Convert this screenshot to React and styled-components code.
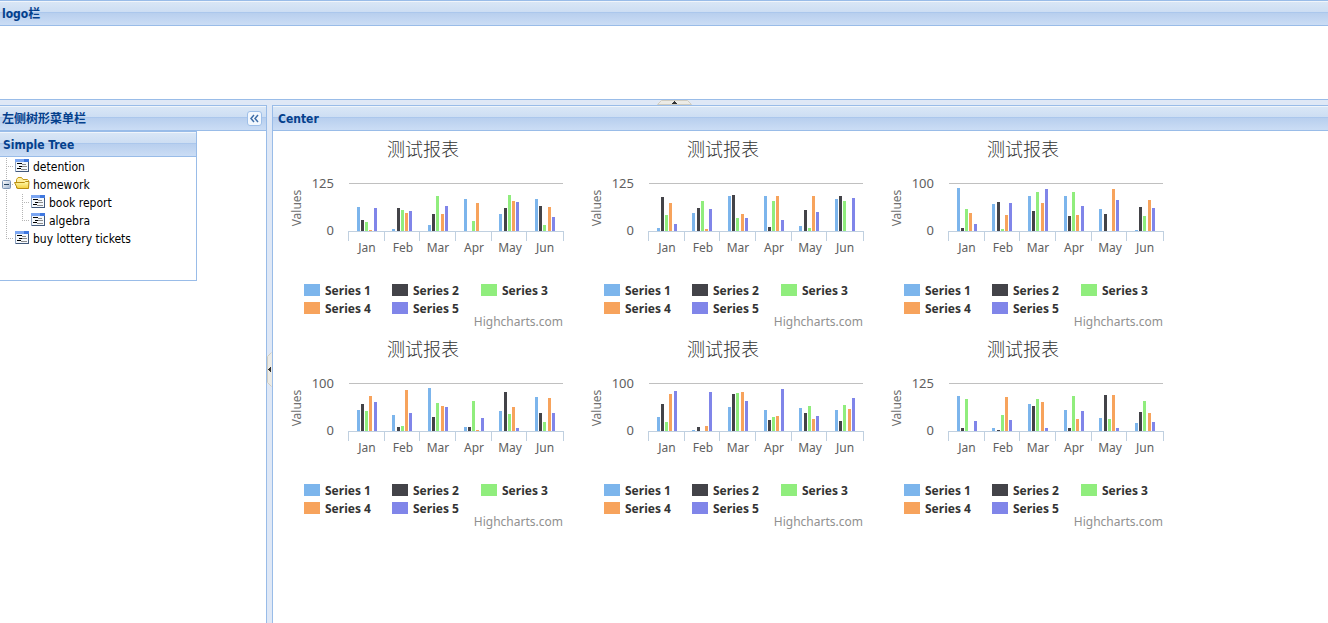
import React, { useState } from "react";
import styled, { createGlobalStyle } from "styled-components";

const GlobalStyle = createGlobalStyle`
  * {
    box-sizing: border-box;
  }
  body {
    margin: 0;
    background-color: #fff;
    font-family: "DejaVu Sans Condensed", "Noto Sans CJK SC", sans-serif;
    font-size: 12px;
    color: #000;
  }
`;

const ViewportWrapper = styled("div")`
  display: flex;
  flex-direction: column;
  height: 100vh;
  overflow: hidden;
`;

const NorthRegion = styled("header")`
  height: 100px;
  flex-shrink: 0;
  border-bottom: 1px solid #99bce8;
`;

const PanelHeader = styled("div")`
  display: flex;
  align-items: center;
  justify-content: space-between;
  height: 26px;
  padding: 0 4px 0 ${(props) => props.$indent || 2}px;
  border-top: 1px solid #99bce8;
  border-bottom: 1px solid #99bce8;
  box-shadow: inset 0 1px 0 #f0f5fb;
  background: linear-gradient(
    #dae7f6,
    #cddef3 45%,
    #abc7ec 46%,
    #abc7ec 50%,
    #b8cfee 51%,
    #cbddf5
  );
`;

const PanelTitle = styled("h2")`
  margin: 0;
  padding-top: 2px;
  font-size: 12px;
  line-height: 18px;
  font-weight: bold;
  color: #04408c;
`;

const HorizontalSplitter = styled("div")`
  display: flex;
  justify-content: center;
  flex-shrink: 0;
  height: 5px;
  padding-left: 20px;
  background-color: #dfe8f6;
`;

const VerticalSplitter = styled("div")`
  display: flex;
  align-items: center;
  flex-shrink: 0;
  width: 5px;
  padding-top: 10px;
  background-color: #dfe8f6;
`;

const SplitterButton = styled("button")`
  display: flex;
  border: none;
  padding: 0;
  background-color: transparent;
  cursor: pointer;
`;

const MainRow = styled("div")`
  display: flex;
  flex-grow: 1;
  min-height: 0;
`;

const WestRegion = styled("nav")`
  width: 267px;
  flex-shrink: 0;
  border-right: 1px solid #99bce8;
`;

const CenterRegion = styled("main")`
  flex-grow: 1;
  min-width: 0;
  overflow: hidden;
  border-left: 1px solid #99bce8;
`;

const CollapseButton = styled("button")`
  display: flex;
  align-items: center;
  justify-content: center;
  width: 15px;
  height: 15px;
  padding: 0;
  border: 1px solid #9ebfe8;
  border-radius: 3px;
  background-color: #f3f8fe;
  cursor: pointer;
`;

const TreePanel = styled("section")`
  width: 197px;
  height: 150px;
  border-right: 1px solid #99bce8;
  border-bottom: 1px solid #99bce8;
`;

const TreeList = styled("ul")`
  list-style: none;
  margin: 0;
  padding: 0;
`;

const TreeRow = styled("div")`
  display: flex;
  height: 18px;
  line-height: 21px;
  cursor: pointer;
`;

const TreeLabel = styled("span")`
  padding-left: 2px;
  white-space: nowrap;
`;

const ExpandButton = styled("button")`
  display: flex;
  width: 15px;
  height: 18px;
  padding: 0;
  border: none;
  background-color: transparent;
  cursor: pointer;
`;

const ChartGrid = styled("div")`
  display: grid;
  grid-template-columns: repeat(3, 300px);
`;

const ChartWrapper = styled("figure")`
  display: flex;
  flex-direction: column;
  height: 200px;
  margin: 0;
  font-family: "Noto Sans", "Noto Sans CJK SC", sans-serif;
`;

const ChartTitle = styled("figcaption")`
  line-height: 35px;
  height: 37px;
  text-align: center;
  font-family: "Noto Sans CJK SC", sans-serif;
  font-size: 18px;
  font-weight: 300;
  color: #333;
`;

const LegendGrid = styled("div")`
  display: grid;
  grid-template-columns: 88px 89px 80px;
  grid-auto-rows: 18px;
  padding-left: 31px;
`;

const LegendButton = styled("button")`
  display: flex;
  align-items: center;
  gap: 5px;
  padding: 0;
  border: none;
  background-color: transparent;
  font-family: inherit;
  font-size: 12px;
  line-height: 16px;
  font-weight: bold;
  color: ${(props) => (props.$off ? "#ccc" : "#333")};
  cursor: pointer;
`;

const LegendLabel = styled("span")`
  padding-top: 2px;
`;

const Swatch = styled("span")`
  width: 16px;
  height: 12px;
  background-color: ${(props) => props.$color};
`;

const CreditsLink = styled("a")`
  align-self: flex-end;
  margin-right: 10px;
  font-size: 12px;
  line-height: 10px;
  color: #909090;
  text-decoration: none;
`;

const SERIES = [
  { name: "Series 1", color: "#7cb5ec" },
  { name: "Series 2", color: "#434348" },
  { name: "Series 3", color: "#90ed7d" },
  { name: "Series 4", color: "#f7a35c" },
  { name: "Series 5", color: "#8085e9" },
];

const MONTHS = ["Jan", "Feb", "Mar", "Apr", "May", "Jun"];
const TICKS = [75, 111, 146, 182, 218, 253, 290];
const BAR_X = [
  [84, 88, 92, 96, 101],
  [119, 124, 128, 132, 136],
  [155, 159, 163, 168, 172],
  [191, 195, 199, 203, 208],
  [226, 231, 235, 239, 243],
  [262, 266, 270, 275, 279],
];
const BASELINE = 63;

// bars holds one row per month, one column height per series
const CHARTS = [
  {
    max: 125,
    bars: [
      [24, 11, 9, 1, 23],
      [2, 23, 21, 18, 20],
      [6, 17, 35, 17, 25],
      [32, 0, 10, 28, 0],
      [17, 23, 36, 30, 29],
      [32, 25, 6, 24, 14],
    ],
  },
  {
    max: 125,
    bars: [
      [3, 34, 16, 28, 7],
      [18, 23, 30, 2, 22],
      [35, 36, 13, 17, 13],
      [35, 4, 30, 35, 11],
      [5, 21, 3, 35, 19],
      [32, 35, 30, 0, 33],
    ],
  },
  {
    max: 100,
    bars: [
      [43, 3, 22, 18, 7],
      [27, 29, 2, 16, 28],
      [35, 20, 39, 28, 42],
      [35, 15, 39, 16, 25],
      [22, 17, 0, 42, 31],
      [1, 24, 15, 31, 23],
    ],
  },
  {
    max: 100,
    bars: [
      [21, 27, 20, 35, 29],
      [16, 4, 5, 41, 18],
      [43, 14, 28, 25, 24],
      [4, 4, 30, 1, 13],
      [20, 39, 17, 24, 3],
      [34, 18, 9, 33, 18],
    ],
  },
  {
    max: 100,
    bars: [
      [14, 27, 9, 37, 40],
      [1, 4, 0, 5, 39],
      [24, 37, 38, 39, 30],
      [21, 11, 14, 15, 42],
      [23, 18, 25, 12, 15],
      [21, 10, 26, 22, 33],
    ],
  },
  {
    max: 125,
    bars: [
      [35, 3, 32, 0, 10],
      [3, 1, 16, 34, 11],
      [27, 25, 32, 29, 3],
      [21, 3, 35, 12, 20],
      [13, 36, 12, 36, 3],
      [8, 19, 30, 18, 9],
    ],
  },
];

const Chart = ({ max, bars }) => {
  const [hidden, setHidden] = useState([]);
  const toggleSeries = (i) =>
    setHidden((prev) =>
      prev.includes(i) ? prev.filter((s) => s !== i) : [...prev, i]
    );

  return (
    <ChartWrapper>
      <ChartTitle>测试报表</ChartTitle>
      <svg width="300" height="113" fontSize="12" fill="#606060">
        <rect x="76" y="15" width="214" height="1" fill="#c0c0c0" />
        {bars.map((row, m) =>
          row.map((h, s) =>
            hidden.includes(s) ? null : (
              <rect
                key={`${m}-${s}`}
                x={BAR_X[m][s]}
                y={BASELINE - h}
                width="3"
                height={h}
                fill={SERIES[s].color}
              />
            )
          )
        )}
        <rect x="75" y={BASELINE} width="216" height="1" fill="#c0d0e0" />
        {TICKS.map((x) => (
          <rect key={x} x={x} y={BASELINE} width="1" height="10" fill="#c0d0e0" />
        ))}
        {MONTHS.map((month, i) => (
          <text key={month} x={TICKS[i] + 19} y="84" textAnchor="middle">
            {month}
          </text>
        ))}
        <text x="61" y="20" fontSize="13" textAnchor="end">
          {max}
        </text>
        <text x="61" y="67" fontSize="13" textAnchor="end">
          0
        </text>
        <text
          transform="translate(28 40) rotate(-90)"
          textAnchor="middle"
          fill="#707070"
        >
          Values
        </text>
      </svg>
      <LegendGrid>
        {SERIES.map((series, i) => (
          <LegendButton
            key={series.name}
            $off={hidden.includes(i)}
            onClick={() => toggleSeries(i)}
          >
            <Swatch $color={hidden.includes(i) ? "#ccc" : series.color} />
            <LegendLabel>{series.name}</LegendLabel>
          </LegendButton>
        ))}
      </LegendGrid>
      <CreditsLink href="http://www.highcharts.com">Highcharts.com</CreditsLink>
    </ChartWrapper>
  );
};

// dotted connector in front of a node; the last child stops half way down
const Elbow = ({ last }) => (
  <svg width="15" height="18" stroke="#b4b4b4" strokeDasharray="1 1">
    <path d={last ? "M6.5 1V10" : "M6.5 1V18"} />
    <path d="M8 9.5H14" />
  </svg>
);

const ElbowLine = () => (
  <svg width="16" height="18" stroke="#b4b4b4" strokeDasharray="1 1">
    <path d="M6.5 1V18" />
  </svg>
);

const ToggleIcon = ({ open }) => (
  <svg width="15" height="18">
    <defs>
      <linearGradient id="toggle" x1="0" y1="0" x2="1" y2="1">
        <stop offset="0" stopColor="#fff" />
        <stop offset="1" stopColor="#9fb4d0" />
      </linearGradient>
    </defs>
    <path d="M6.5 1V18M12 9.5H14" stroke="#b4b4b4" strokeDasharray="1 1" />
    <rect x="2.5" y="5.5" width="8" height="8" rx="1" fill="url(#toggle)" stroke="#7b94b5" />
    <path d="M4 9.5H9" stroke="#22405f" />
    {open ? null : <path d="M6.5 7V12" stroke="#22405f" />}
  </svg>
);

const LeafIcon = () => (
  <svg width="16" height="18">
    <rect x="0" y="2" width="14" height="13" fill="#42597b" />
    <rect x="0" y="2" width="1" height="13" fill="#8ea3c0" />
    <rect x="1" y="5" width="12" height="9" fill="#f4f8fc" />
    <rect x="0" y="2" width="14" height="3" fill="#3f78e0" />
    <rect x="0" y="2" width="9" height="3" fill="#7ba6f2" />
    <path d="M2 6.5H7M4 9.5H7M2 11.5H6" stroke="#000" />
    <path d="M7 7.5H11M7 9.5H12M6 12.5H12" stroke="#8c8c8c" />
  </svg>
);

const FolderIcon = () => (
  <svg width="16" height="18" overflow="visible">
    <defs>
      <linearGradient id="folder" x1="0" y1="0" x2="0" y2="1">
        <stop offset="0" stopColor="#fffbb0" />
        <stop offset="1" stopColor="#f5cf3d" />
      </linearGradient>
    </defs>
    <path
      d="M1.5 13V4.5L3 2.5H6.500L8 4.5H12.5L13.5 5.5V13Z"
      fill="#fff0a0"
      stroke="#c49a1c"
    />
    <path
      d="M-0.5 7.5H9.5L10.5 6.5H14L13.5 13.5H2.5Z"
      fill="url(#folder)"
      stroke="#b98d10"
    />
  </svg>
);

const TREE = [
  { text: "detention" },
  {
    text: "homework",
    children: [{ text: "book report" }, { text: "algebra", last: true }],
  },
  { text: "buy lottery tickets", last: true },
];

const TreeNode = ({ node, nested }) => {
  const [open, setOpen] = useState(true);
  return (
    <li>
      <TreeRow>
        {nested ? <ElbowLine /> : null}
        {node.children ? (
          <ExpandButton
            aria-label={`Toggle ${node.text}`}
            aria-expanded={open}
            onClick={() => setOpen((prev) => !prev)}
          >
            <ToggleIcon open={open} />
          </ExpandButton>
        ) : (
          <Elbow last={node.last} />
        )}
        {node.children ? <FolderIcon /> : <LeafIcon />}
        <TreeLabel>{node.text}</TreeLabel>
      </TreeRow>
      {node.children && open ? (
        <TreeList>
          {node.children.map((child) => (
            <TreeNode key={child.text} node={child} nested />
          ))}
        </TreeList>
      ) : null}
    </li>
  );
};

const App = () => (
  <>
    <GlobalStyle />
    <ViewportWrapper>
      <NorthRegion>
        <PanelHeader>
          <PanelTitle>logo栏</PanelTitle>
        </PanelHeader>
      </NorthRegion>
      <HorizontalSplitter>
        <SplitterButton aria-label="Collapse top panel">
          <svg width="35" height="5">
            <path d="M0 5L4 0H31L35 5Z" fill="#ecebe6" />
            <path d="M0.5 4.5L4.5 0.5H30.5L34.5 4.5Z" fill="none" stroke="#d0cdc2" />
            <path d="M17 1h1v1h1v1h1v1h-5v-1h1v-1h1z" fill="#333" />
          </svg>
        </SplitterButton>
      </HorizontalSplitter>
      <MainRow>
        <WestRegion>
          <PanelHeader>
            <PanelTitle>左侧树形菜单栏</PanelTitle>
            <CollapseButton aria-label="Collapse menu">
              <svg width="9" height="9" fill="none" stroke="#3f6ea8" strokeWidth="1.5">
                <path d="M4 1L1 4.5L4 8M8 1L5 4.5L8 8" />
              </svg>
            </CollapseButton>
          </PanelHeader>
          <TreePanel>
            <PanelHeader $indent={3}>
              <PanelTitle>Simple Tree</PanelTitle>
            </PanelHeader>
            <TreeList>
              {TREE.map((node) => (
                <TreeNode key={node.text} node={node} />
              ))}
            </TreeList>
          </TreePanel>
        </WestRegion>
        <VerticalSplitter>
          <SplitterButton aria-label="Collapse left panel">
            <svg width="5" height="35">
              <path d="M5 0L0 4V31L5 35Z" fill="#ecebe6" />
              <path d="M4.5 0.5L0.5 4.5V30.5L4.5 34.5" fill="none" stroke="#d0cdc2" />
              <path d="M4 15v5h-1v-1h-1v-1h-1v-1h1v-1h1v-1z" fill="#333" />
            </svg>
          </SplitterButton>
        </VerticalSplitter>
        <CenterRegion>
          <PanelHeader $indent={5}>
            <PanelTitle>Center</PanelTitle>
          </PanelHeader>
          <ChartGrid>
            {CHARTS.map((chart, i) => (
              <Chart key={i} max={chart.max} bars={chart.bars} />
            ))}
          </ChartGrid>
        </CenterRegion>
      </MainRow>
    </ViewportWrapper>
  </>
);

export default App;
